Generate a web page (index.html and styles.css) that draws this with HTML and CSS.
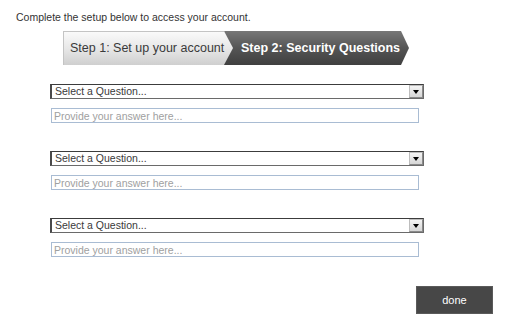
FILE: index.html
```html
<!DOCTYPE html>
<html>
  <head>
    <link rel="stylesheet" href="styles.css">
  </head>

  <body>
    <p class="intro">Complete the setup below to access your account.</p>

    <div class="steps">
      <div class="step step-done">Step 1: Set up your account</div>
      <div class="step step-current">Step 2: Security Questions</div>
    </div>

    <div class="questions">
      <div class="question">
        <div class="select">
          <span class="select-text">Select a Question...</span>
          <span class="select-arrow"></span>
        </div>
        <input type="text" class="answer" placeholder="Provide your answer here...">
      </div>

      <div class="question">
        <div class="select">
          <span class="select-text">Select a Question...</span>
          <span class="select-arrow"></span>
        </div>
        <input type="text" class="answer" placeholder="Provide your answer here...">
      </div>

      <div class="question">
        <div class="select">
          <span class="select-text">Select a Question...</span>
          <span class="select-arrow"></span>
        </div>
        <input type="text" class="answer" placeholder="Provide your answer here...">
      </div>
    </div>

    <div class="actions">
      <button class="btn-done">done</button>
    </div>
  </body>
</html>
```

FILE: styles.css
```css
* {
  box-sizing: border-box;
}

body {
  margin: 0;
  font-family: "Liberation Sans", Arial, sans-serif;
  color: #333;
  background: #fff;
}

.intro {
  margin: 0;
  padding: 11px 0 0 16px;
  font-size: 10.5px;
  line-height: 12px;
}

.steps {
  display: flex;
  margin: 8px 0 0 63px;
  height: 34px;
}

.step {
  display: flex;
  align-items: center;
  font-size: 12.5px;
  height: 34px;
}

.step-done {
  position: relative;
  z-index: 1;
  width: 170px;
  padding-left: 7px;
  color: #3a3a3a;
  background: linear-gradient(#fbfbfb, #e6e6e6 55%, #cfcfcf);
  clip-path: polygon(0 0, 161px 0, 170px 50%, 161px 100%, 0 100%);
  box-shadow: inset 1px 1px 0 #c4c4c4;
}

.step-current {
  width: 185px;
  margin-left: -9px;
  padding-left: 17px;
  font-weight: bold;
  color: #fff;
  background: linear-gradient(#777, #555 50%, #3f3f3f);
  clip-path: polygon(0 0, 177px 0, 185px 50%, 177px 100%, 0 100%);
}

.questions {
  display: flex;
  flex-direction: column;
  gap: 28px;
  margin: 19px 0 0 50px;
}

.question {
  display: flex;
  flex-direction: column;
  gap: 9px;
}

.select {
  display: flex;
  align-items: center;
  width: 374px;
  height: 15px;
  border: 1px solid #6a6a6a;
  border-left: 2px solid #4a4a4a;
  border-top: 1px solid #3c3c3c;
  background: #fff;
}

.select-text {
  flex: 1;
  padding-left: 3px;
  font-size: 10.5px;
  line-height: 13px;
  color: #3a3a3a;
}

.select-arrow {
  position: relative;
  width: 14px;
  height: 13px;
  background: linear-gradient(#f4f4f4, #d6d6d6);
  border: 1px solid #bdbdbd;
  border-right-color: #8a8a8a;
  border-bottom-color: #8a8a8a;
}

.select-arrow::after {
  content: "";
  position: absolute;
  left: 3px;
  top: 4px;
  border-left: 3.5px solid transparent;
  border-right: 3.5px solid transparent;
  border-top: 4px solid #000;
}

.answer {
  width: 368px;
  height: 15px;
  margin: 0 0 0 1px;
  padding: 0 0 0 2px;
  border: 1px solid #a9bcd3;
  font-family: "Liberation Sans", Arial, sans-serif;
  font-size: 10.5px;
  outline: none;
}

.answer::placeholder {
  color: #a0a0a0;
}

.actions {
  display: flex;
  justify-content: flex-end;
  padding: 29px 19px 0 0;
}

.btn-done {
  width: 77px;
  height: 28px;
  border: 1px solid #5a5a5a;
  background: #474747;
  color: #fff;
  font-family: "Liberation Sans", Arial, sans-serif;
  font-size: 11px;
  cursor: pointer;
}
```
